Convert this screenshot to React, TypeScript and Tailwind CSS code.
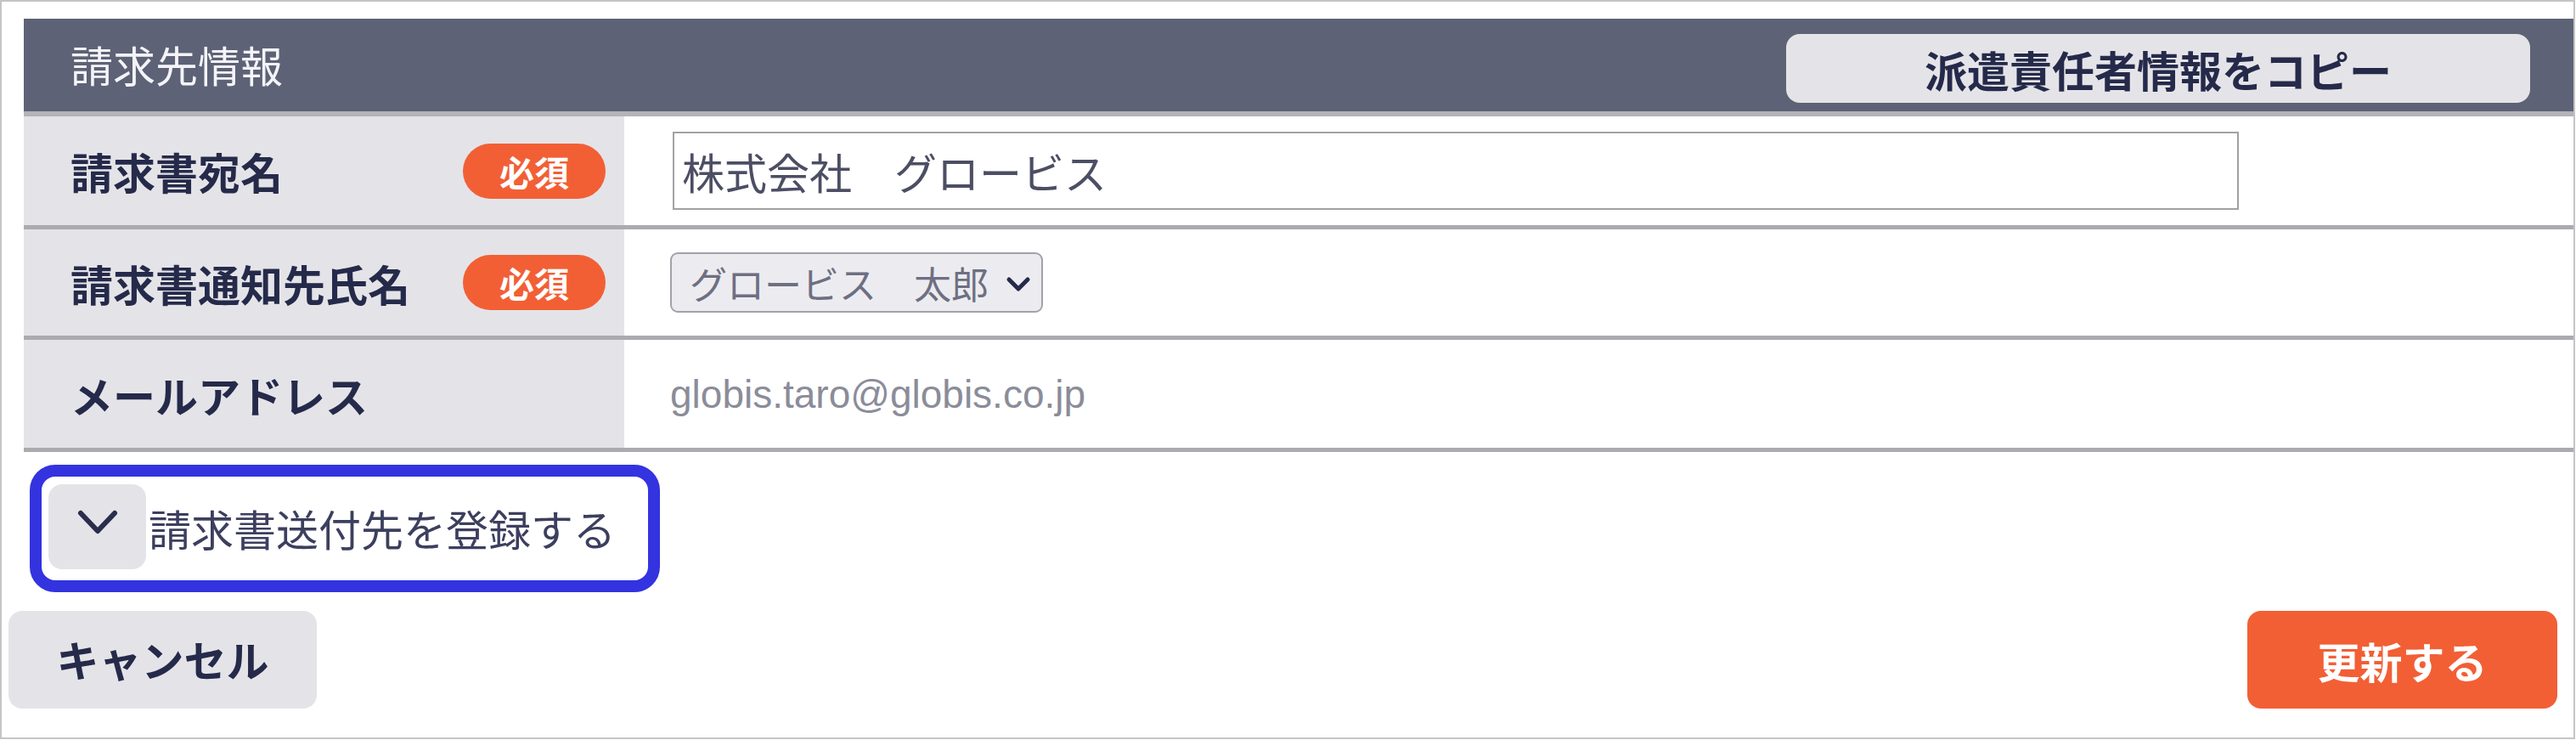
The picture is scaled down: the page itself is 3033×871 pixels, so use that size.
const jp = { fontFamily: '"Noto Sans CJK JP", "Noto Sans", sans-serif' };

function Required() {
  return (
    <span className="flex h-[65px] w-[168px] items-center justify-center rounded-full bg-[#f25f35] text-[41px] font-bold leading-none text-white">
      必須
    </span>
  );
}

function Row({
  label,
  required,
  height,
  children,
}: {
  label: string;
  required?: boolean;
  height: string;
  children: React.ReactNode;
}) {
  return (
    <div className={`flex border-b-[5px] border-[#ababaf] ${height}`}>
      <div className="flex w-[707px] shrink-0 items-center justify-between bg-[#e4e4e8] pl-[55px] pr-[22px]">
        <span className="text-[50px] font-bold leading-none text-[#262a4a]">{label}</span>
        {required && <Required />}
      </div>
      <div className="flex flex-1 items-center pl-[54px]">{children}</div>
    </div>
  );
}

export default function App() {
  return (
    <div
      className="flex h-[870px] w-[3032px] flex-col border-2 border-[#c4c4c4] bg-white"
      style={jp}
    >
      {/* Billing info table */}
      <div className="ml-[26px] mt-[20px]">
        <div className="flex h-[115px] items-center justify-between border-b-[6px] border-[#b3b3b8] bg-[#5d6276] pl-[55px] pr-[51px]">
          <span className="mb-[3px] text-[50px] leading-none text-[#f4f4f8]">請求先情報</span>
          <button className="mt-[8px] flex h-[81px] w-[876px] items-center justify-center rounded-[16px] bg-[#e4e4e8] text-[50px] font-bold leading-none text-[#262a4a]">
            派遣責任者情報をコピー
          </button>
        </div>

        <Row label="請求書宛名" required height="h-[133px]">
          <div className="ml-[3px] flex h-[92px] w-[1844px] items-center border-2 border-[#a2a2a6] bg-white pl-[9px] text-[50px] leading-none text-[#4c4e64]">
            株式会社　グロービス
          </div>
        </Row>

        <Row label="請求書通知先氏名" required height="h-[130px]">
          <div className="flex h-[71px] w-[439px] items-center justify-between rounded-[9px] border-2 border-[#a2a2a8] bg-[#ececf0] pl-[21px] pr-[12px]">
            <span className="text-[44px] leading-none text-[#6e6f82]">グロービス　太郎</span>
            <svg width="30" height="20" viewBox="0 0 30 20" className="mt-[4px]">
              <polyline
                points="4,4 15,15 26,4"
                fill="none"
                stroke="#262a4a"
                strokeWidth="5"
                strokeLinecap="round"
                strokeLinejoin="round"
              />
            </svg>
          </div>
        </Row>

        <Row label="メールアドレス" height="h-[132px]">
          <span
            className="text-[46px] leading-none text-[#8b8c99]"
            style={{ fontFamily: '"Liberation Sans", Arial, sans-serif' }}
          >
            globis.taro@globis.co.jp
          </span>
        </Row>
      </div>

      {/* Toggle for billing address */}
      <div className="ml-[33px] mt-[15px] flex h-[150px] w-[742px] items-center rounded-[30px] border-[14px] border-[#3333e0] pl-[8px]">
        <div className="mb-[4px] flex h-[100px] w-[115px] items-center justify-center rounded-[16px] bg-[#e4e4e8]">
          <svg width="48" height="30" viewBox="0 0 48 30" className="mb-[10px]">
            <polyline
              points="4,4 24,25 44,4"
              fill="none"
              stroke="#2a2d4c"
              strokeWidth="6"
              strokeLinecap="round"
              strokeLinejoin="round"
            />
          </svg>
        </div>
        <span className="ml-[3px] mb-[2px] text-[50px] leading-none text-[#3c3f5e]">請求書送付先を登録する</span>
      </div>

      {/* Actions */}
      <div className="mt-[22px] flex justify-between pl-[8px] pr-[19px]">
        <button className="flex h-[115px] w-[363px] items-center justify-center rounded-[16px] bg-[#e4e4e8] pb-[4px] text-[50px] font-bold leading-none text-[#262a4a]">
          キャンセル
        </button>
        <button className="flex h-[115px] w-[365px] items-center justify-center rounded-[16px] bg-[#f25f35] text-[50px] font-bold leading-none text-white">
          更新する
        </button>
      </div>
    </div>
  );
}
